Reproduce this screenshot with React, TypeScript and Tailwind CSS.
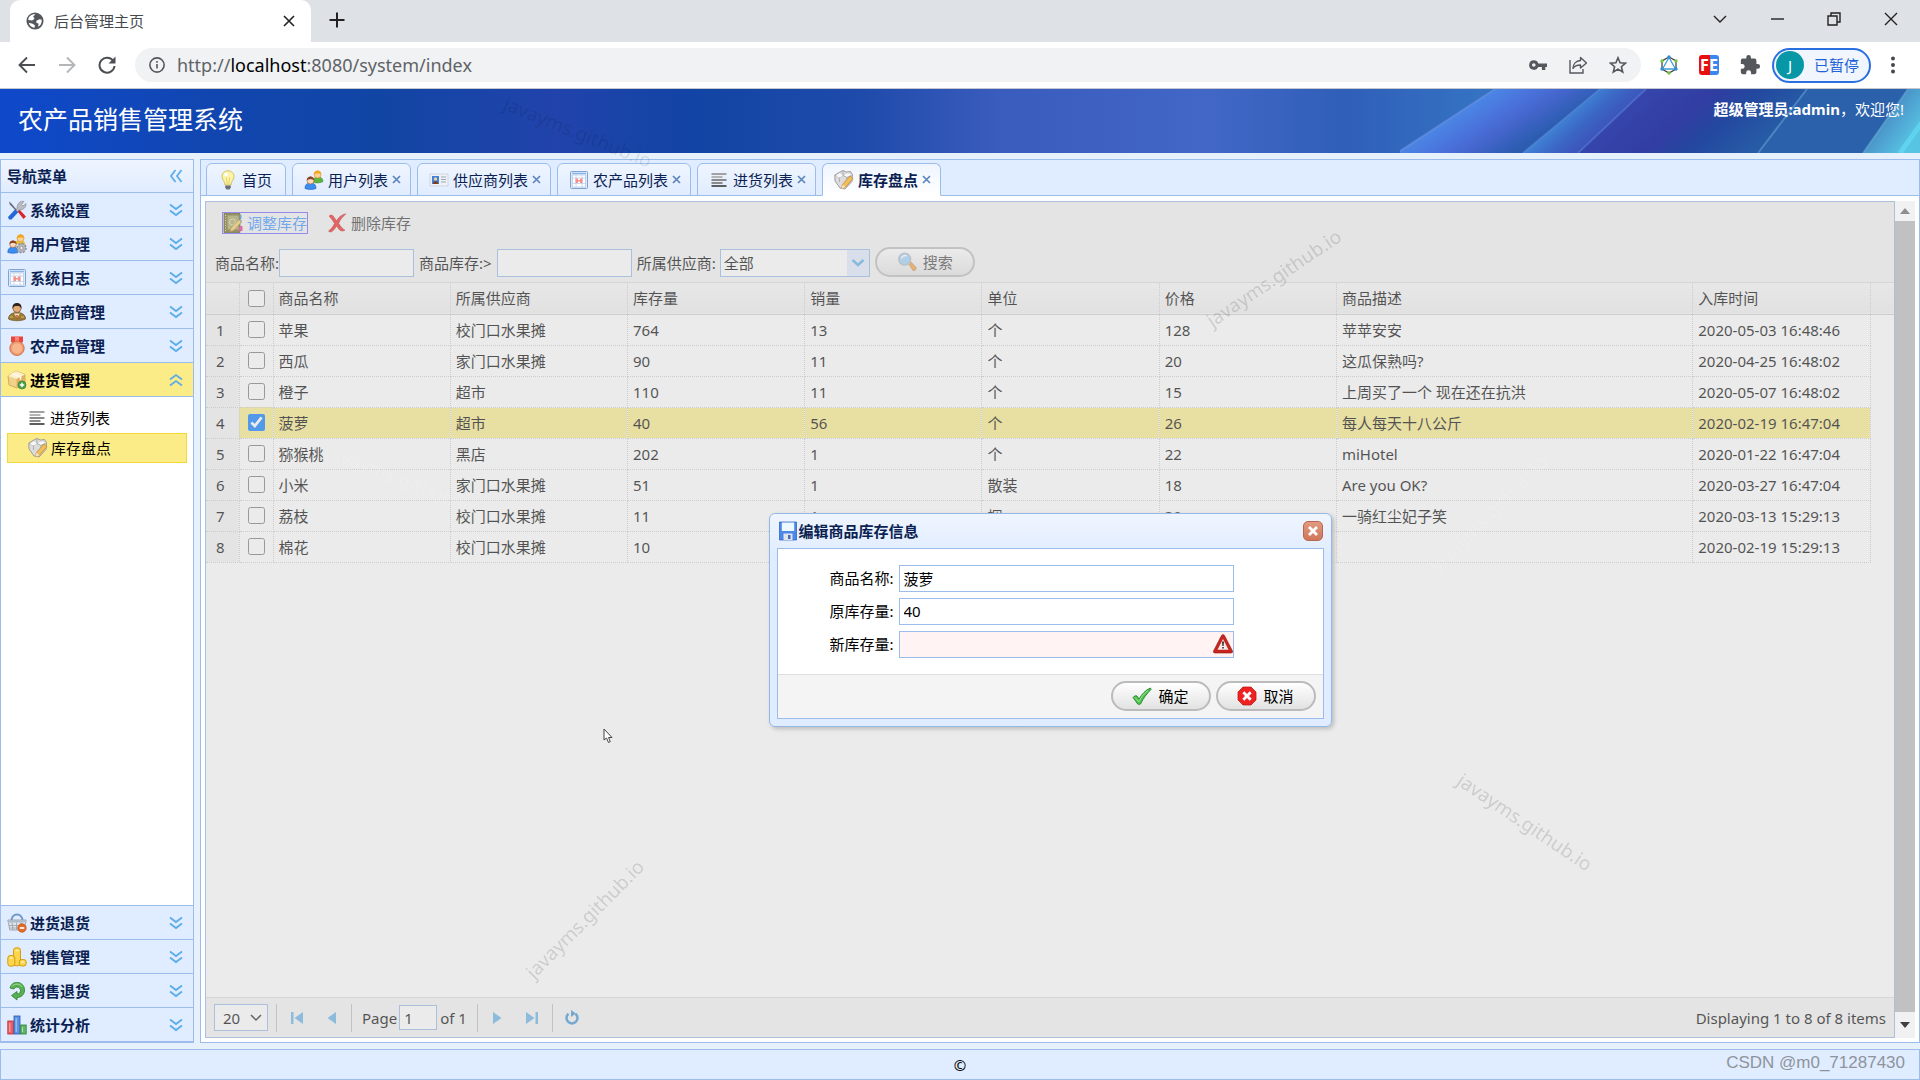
import type { ReactNode } from "react";

type IconProps = { className?: string };

function Svg({ children, className = "h-5 w-5" }: { children: ReactNode; className?: string }) {
  return (
    <svg viewBox="0 0 20 20" className={`shrink-0 ${className}`} fill="none" aria-hidden="true">
      {children}
    </svg>
  );
}

const ToolsIcon = () => (
  <Svg>
    <path d="M2 1.500 4 3l5.500 6.500-1 1L2.800 4.500z" fill="#6d6d78" />
    <path d="M9 9.500 11 8l8 8.500-2.500 2.500z" fill="#d9252a" />
    <path d="M1 17 8.500 9l3 3L4.500 19.500H2z" fill="#2568d8" />
    <path d="M10 8.500c0-5 3-8 7-7l-2.500 3 1.500 1.500L19 3.500c.5 4-3 6.500-6.500 6.500l-2 1.500-1.500-1z" fill="#b9bcc2" stroke="#85888f" strokeWidth=".6" />
  </Svg>
);

const UsersIcon = () => (
  <Svg>
    <path d="M9 12c0-3.500 2-5 5-5s5 1.500 5 4.500c-2 1.500-7 2-10 .5z" fill="#5cb53c" stroke="#3d8c2a" strokeWidth=".6" />
    <circle cx="13.500" cy="4.500" r="3.500" fill="#fbd29a" stroke="#d8922c" strokeWidth=".7" />
    <path d="M9.800 4.500C10 1.500 12 .5 13.500.5s3.800 1 3.700 4c-1.500-1.200-5-1.500-7.400 0z" fill="#f2a91c" />
    <path d="M1 18.500C1 14.500 3 13 6.500 13s5.500 1.500 5.500 5.500c-3 1.300-8 1.300-11 0z" fill="#3b8df0" stroke="#1c62c0" strokeWidth=".6" />
    <circle cx="6.500" cy="10.500" r="3.500" fill="#fcdcc0" stroke="#b0653e" strokeWidth=".7" />
    <path d="M2.800 10.500c0-3 2-4 3.700-4s3.800 1 3.700 4C8.700 9 5 8.500 2.800 10.500z" fill="#8d4327" />
  </Svg>
);

const UserGearIcon = () => (
  <Svg>
    <path d="M8 10c0-3 2-4 5-4s6 2 5 5z" fill="#e5c23c" />
    <circle cx="13.500" cy="4.200" r="3.500" fill="#fbd29a" stroke="#d8922c" strokeWidth=".7" />
    <path d="M9.800 4.500C10 1.500 12 .4 13.500.4s3.800 1 3.700 4c-1.500-1.200-5-1.500-7.400.1z" fill="#f2a91c" />
    <path d="M.8 18.500C.8 14.500 3 13 6 13s5 1.500 5 5.500c-3 1-7.500 1-10.200 0z" fill="#3b8df0" stroke="#1c62c0" strokeWidth=".6" />
    <circle cx="6" cy="10.200" r="3.300" fill="#fcdcc0" stroke="#b0653e" strokeWidth=".7" />
    <path d="M2.600 10.200c0-3 1.800-3.700 3.400-3.700s3.600.7 3.500 3.700C8 8.700 4.500 8.500 2.600 10.200z" fill="#8d4327" />
    <circle cx="14.500" cy="14" r="4.400" fill="#a4a6aa" stroke="#898b90" strokeWidth="1.600" strokeDasharray="2 1.400" />
    <circle cx="14.500" cy="14" r="3.800" fill="#b5b7bb" />
    <circle cx="14.500" cy="14" r="1.600" fill="#f4f4f4" stroke="#808287" strokeWidth=".6" />
  </Svg>
);

const ReportIcon = () => (
  <Svg>
    <rect x="1.500" y="1.500" width="17" height="17" rx="1" fill="#dbe9fa" stroke="#7fa3d2" />
    <path d="M3.500 5h13v12h-13z" fill="#fff" stroke="#a5bddc" strokeWidth=".6" />
    <path d="M3 3.400h14" stroke="#88b5e8" strokeWidth="1.200" />
    <path d="M3.500 8h13M3.500 13.500h13M7 5v12M13 5v12" stroke="#b5cbe6" strokeWidth=".7" />
    <path d="M6.500 8.500H9v1.600h2V8.500h2.500V13H11v-1.400H9V13H6.500z" fill="#f58f8c" />
  </Svg>
);

const SupplierIcon = () => (
  <Svg>
    <path d="M1.500 17c0-4 3-6.500 8.500-6.500s8.500 2.500 8.500 6.500c-4 2.300-13 2.300-17 0z" fill="#9c7a34" stroke="#6d5220" strokeWidth=".7" />
    <path d="M7 11.500 10 16l3-4.500z" fill="#f4e2b8" />
    <path d="m9.300 13 .7 5 .7-5z" fill="#b62d22" />
    <circle cx="10" cy="6.500" r="4" fill="#e4aa76" stroke="#714426" strokeWidth=".6" />
    <path d="M5.500 7C5 3 7 1 10 1s5 2 4.500 6c-.8-2.500-2-3-4.500-3S6.300 4.500 5.500 7z" fill="#30231c" />
    <path d="M3 15h3M14 15h3" stroke="#d9be6b" />
  </Svg>
);

const MedalIcon = () => (
  <Svg>
    <path d="M4 .5h12v5.500l-3 1.500H7L4 6z" fill="#e8453c" />
    <path d="M8 .5h4v6H8z" fill="#f9827a" />
    <circle cx="10" cy="12.300" r="7.200" fill="#f2986a" stroke="#c8673a" strokeWidth=".8" />
    <circle cx="10" cy="12.300" r="5.400" fill="#f8b48b" stroke="#efa077" strokeWidth=".6" />
  </Svg>
);

const BoxAddIcon = () => (
  <Svg>
    <path d="m1 6 8-5 9 3.500v8L10 18 2 15z" fill="#f2d18a" stroke="#c2994a" strokeWidth=".7" />
    <path d="m1 6 8.500 3L18 4.500 9 1z" fill="#fdf0cc" />
    <path d="M9.500 9v9L18 12.500v-8z" fill="#dfb163" />
    <path d="m5 3.500 8.500 3.200v3" stroke="#fff9e6" strokeWidth="1.600" />
    <circle cx="15" cy="15" r="4" fill="#4ba04a" stroke="#2f7a33" strokeWidth=".6" />
    <path d="M15 12.800v4.400M12.800 15h4.400" stroke="#fff" strokeWidth="1.400" />
  </Svg>
);

const ListIcon = () => (
  <Svg>
    <path d="M2.500 4h15" stroke="#a2a2a2" strokeWidth="2" />
    <path d="M2.500 7h11" stroke="#b4b4b4" strokeWidth="2" />
    <path d="M2.500 10h15" stroke="#8a8a8a" strokeWidth="2" />
    <path d="M2.500 13h11" stroke="#8a8a8a" strokeWidth="2" />
    <path d="M2.500 16h15" stroke="#5e5e5e" strokeWidth="2" />
  </Svg>
);

const StockIcon = () => (
  <Svg>
    <path d="m5 2.500 4-2 3.500 1.500 4-.5 2 3-.5 7-7 7.500-5-1L1 11 .8 5z" fill="#dcdcdc" stroke="#8b8b8b" strokeWidth=".8" />
    <path d="m1.500 5.500 4 2 3.500-2 4 1.800 4.500-2M5.500 7.500V12M9 1.200v4.300M13 7v3" stroke="#9b9b9b" strokeWidth=".7" />
    <path d="m2 6 3.500 1.500L9 5.800 5.500 3.200zM10 5.500l3 1.300 4-1.800-3-1.800z" fill="#fafafa" />
    <path d="M8.500 14.500 16 6l3 2.500-7.500 8.700-3.800 1.500z" fill="#f2bf5c" stroke="#bd7f25" strokeWidth=".7" />
    <path d="m7.700 18.700.8-4 3 2.500z" fill="#f7e3bf" />
  </Svg>
);

const BasketIcon = () => (
  <Svg>
    <path d="M4.500 8c0-4 2.500-6.500 5.500-6.500S15.500 4 15.500 8" stroke="#6e98cb" strokeWidth="2" />
    <path d="M.8 7h18.400l-2 10H2.800z" fill="#dfe3e8" stroke="#8f98a5" strokeWidth=".8" />
    <path d="M1 7h18v2.500H1z" fill="#aebccc" />
    <path d="M5 9.500 6 17m3.500-7.500V17m4.500-7.500L13 17M2 12.500h16M2.500 15h15" stroke="#8f98a5" strokeWidth=".7" />
    <circle cx="15" cy="15" r="4.200" fill="#ea6a25" stroke="#b4420f" strokeWidth=".6" />
    <path d="M12.700 15h4.600" stroke="#fff" strokeWidth="1.700" />
  </Svg>
);

const CoinsIcon = () => (
  <Svg>
    <g fill="#fbd54a" stroke="#d69a10" strokeWidth="1">
      <rect x="6.500" y=".8" width="7" height="18" rx="2.600" />
      <rect x=".8" y="8.500" width="7" height="10.700" rx="2.600" />
      <rect x="12.200" y="12.500" width="7" height="6.500" rx="2.600" />
    </g>
    <path d="M8.500 3.500h3M2.800 11h3M14.200 15h3" stroke="#fff3b8" strokeWidth="1.600" />
  </Svg>
);

const ReturnIcon = () => (
  <Svg>
    <path d="M3 7c1-4 4-6 8-5.500 4 .5 7 4 6.500 8.500-.5 4-3.500 6.500-7.500 6.500V19l-5.500-4.500 5.500-4v2.500c2 0 3.500-1.200 3.500-3.200C13.500 7.500 12 6 10 6c-1.500 0-2.500.8-3 2z" fill="#58b14f" stroke="#2f7e2f" strokeWidth=".8" />
    <path d="M5 5.500C7 2.500 13 2 15 6" stroke="#a6dda0" />
  </Svg>
);

const ChartIcon = () => (
  <Svg>
    <rect x=".8" y="6" width="5.500" height="13" fill="#ea6064" stroke="#b92a31" strokeWidth=".8" />
    <rect x="7" y="1" width="6" height="18" fill="#5d93e4" stroke="#2457a8" strokeWidth=".8" />
    <rect x="13.700" y="10" width="5.500" height="9" fill="#5fb766" stroke="#2b7d33" strokeWidth=".8" />
    <path d="M2.800 8v9M9.200 3v14M15.500 12v5" stroke="#fff" strokeOpacity=".5" />
  </Svg>
);

const BulbIcon = () => (
  <Svg>
    <path d="M10 .8c3.600 0 6 2.600 6 5.700 0 3.500-3 4.500-3 8.500H7c0-4-3-5-3-8.500C4 3.400 6.400.8 10 .8z" fill="#fbf3a6" stroke="#c9bb4e" strokeWidth=".9" />
    <path d="M8.300 7.500 9.200 14M11.700 7.500l-.9 6.500" stroke="#d8c552" strokeWidth=".7" />
    <ellipse cx="8" cy="4.500" rx="1.800" ry="2" fill="#fff" />
    <path d="M7.200 15.500h5.600v2L11.500 19.500h-3l-1.300-2z" fill="#6d7078" />
  </Svg>
);

const CardIcon = () => (
  <Svg>
    <path d="M1 4h18v12H1z" fill="#eef2f6" stroke="#c3ccd6" strokeWidth=".7" />
    <path d="M3 6h7v8H3z" fill="#3d82d8" />
    <circle cx="6.500" cy="9" r="1.700" fill="#f8cfa0" />
    <path d="M4 14c0-2 1-3 2.500-3S9 12 9 14z" fill="#7e3d20" />
    <path d="M12 7h5M12 9.500h5M12 12h5" stroke="#9ba6b3" />
  </Svg>
);

const EditBookIcon = () => (
  <Svg>
    <path d="M1 .5h16v19H1z" fill="#6f6a1c" stroke="#47430c" strokeWidth=".8" />
    <path d="M4.500 2.500h11v14h-11z" fill="#a9a55c" />
    <path d="M2.500 2v16" stroke="#e4dfa5" strokeDasharray="1 1.500" />
    <path d="M17.500 2v4M17.500 7v3" stroke="#278ed0" strokeWidth="2" />
    <circle cx="9.500" cy="9" r="3" stroke="#dedbb5" strokeWidth="1" />
    <path d="m8 15 8-8.500 2.500 2.500-8 8.500L7 18.500z" fill="#f2cf62" stroke="#a67818" strokeWidth=".7" />
    <path d="M17 13h2.500v5H15z" fill="#ec2a92" />
  </Svg>
);

const DeleteIcon = () => (
  <Svg>
    <path d="M2 3c2-1.500 3.500-1 4.500.5l3 4.300C11.500 4.500 14.500 1.500 19 .8c-3.500 3-6 6-7.300 9.500 1.200 2.500 3.300 5 6.300 7-2.500 1.200-5 .7-6-1L9.500 13c-1.500 2.500-2.500 4.300-5 5.700-1.300.4-2.500.1-3-.7C4.500 15.800 6 13.500 7.500 10.500 6 8 4.500 5.500 2 3z" fill="#f02020" stroke="#c80f0f" strokeWidth=".6" />
  </Svg>
);

const SearchIcon = () => (
  <Svg>
    <path d="m11.500 11.500 2-2 5.500 6c.5 2-1 3.500-3 3z" fill="#f0a040" stroke="#bf6a14" strokeWidth=".6" />
    <circle cx="7.700" cy="7.200" r="5.900" fill="#9ed3fb" stroke="#a9bacb" strokeWidth="1.500" />
    <path d="M4.500 6.500C5 4 7.500 3 9.500 4" stroke="#fff" strokeWidth="1.500" />
  </Svg>
);

const SaveIcon = () => (
  <Svg>
    <path d="M1.500 1h17v18h-17z" fill="#4a88ea" stroke="#225ac0" strokeWidth=".7" />
    <path d="M3.800 1.500h12.400V10H3.800z" fill="#eef8ff" />
    <path d="M5.500 12.500h9V19h-9z" fill="#dfe3ec" />
    <path d="M10 14h2.500v4H10z" fill="#4b6ab0" />
  </Svg>
);

const WarningIcon = ({ className }: IconProps) => (
  <Svg className={className}>
    <path d="M8.500 1.500q1.500-2 3 0L19.500 17q.5 2-1.500 2H2q-2 0-1.500-2z" fill="#c9251f" stroke="#8e1713" strokeWidth=".6" />
    <path d="M10 5 15.500 15.800h-11z" fill="#f3e9e6" />
    <path d="M9 7.500h2l-.4 4.500H9.400zM9.200 13h1.600v1.600H9.200z" fill="#333" />
  </Svg>
);

const OkIcon = () => (
  <Svg>
    <path d="M1 11.500c1-1.500 2.500-2 4-1.500l2 3C10 8 13.500 4 18.500 2l.5 1.500C14.500 8 11.500 12 8.500 18c-.8.600-2 .6-2.800 0z" fill="#4fbf4b" stroke="#258a2a" strokeWidth=".9" />
    <path d="M3 11.500 6.800 16C9.500 10.500 12.500 7 16 4.500" stroke="#a4e79b" strokeWidth=".9" />
  </Svg>
);

const NoIcon = () => (
  <Svg>
    <path d="M6 1h8l5 5v8l-5 5H6l-5-5V6z" fill="#ee2222" stroke="#bb1010" strokeWidth=".7" />
    <path d="m6.300 6.300 7.400 7.400m0-7.400-7.400 7.400" stroke="#fff" strokeWidth="2.800" />
  </Svg>
);

const Chevrons = ({ up = false }: { up?: boolean }) => (
  <svg viewBox="0 0 14 14" className={`h-3.5 w-3.5 ${up ? "rotate-180" : ""}`} fill="none" stroke="#5cade8" strokeWidth="1.800">
    <path d="m1 1.500 6 4.500 6-4.500M1 7.500 7 12l6-4.500" />
  </svg>
);

const topMenus = [
  { name: "系统设置", icon: ToolsIcon },
  { name: "用户管理", icon: UserGearIcon },
  { name: "系统日志", icon: ReportIcon },
  { name: "供应商管理", icon: SupplierIcon },
  { name: "农产品管理", icon: MedalIcon },
  { name: "进货管理", icon: BoxAddIcon, open: true },
];

const bottomMenus = [
  { name: "进货退货", icon: BasketIcon },
  { name: "销售管理", icon: CoinsIcon },
  { name: "销售退货", icon: ReturnIcon },
  { name: "统计分析", icon: ChartIcon },
];

const tabs = [
  { name: "首页", icon: BulbIcon },
  { name: "用户列表", icon: UsersIcon, closable: true },
  { name: "供应商列表", icon: CardIcon, closable: true },
  { name: "农产品列表", icon: ReportIcon, closable: true },
  { name: "进货列表", icon: ListIcon, closable: true },
  { name: "库存盘点", icon: StockIcon, closable: true, active: true },
];

const columns = ["商品名称", "所属供应商", "库存量", "销量", "单位", "价格", "商品描述", "入库时间"];

const goods = [
  ["苹果", "校门口水果摊", "764", "13", "个", "128", "苹苹安安", "2020-05-03 16:48:46"],
  ["西瓜", "家门口水果摊", "90", "11", "个", "20", "这瓜保熟吗?", "2020-04-25 16:48:02"],
  ["橙子", "超市", "110", "11", "个", "15", "上周买了一个 现在还在抗洪", "2020-05-07 16:48:02"],
  ["菠萝", "超市", "40", "56", "个", "26", "每人每天十八公斤", "2020-02-19 16:47:04"],
  ["猕猴桃", "黑店", "202", "1", "个", "22", "miHotel", "2020-01-22 16:47:04"],
  ["小米", "家门口水果摊", "51", "1", "散装", "18", "Are you OK?", "2020-03-27 16:47:04"],
  ["荔枝", "校门口水果摊", "11", "1", "捆", "30", "一骑红尘妃子笑", "2020-03-13 15:29:13"],
  ["棉花", "校门口水果摊", "10", "", "", "", "", "2020-02-19 15:29:13"],
];

const selectedRow = 3;

function MenuHeader({ name, icon: Icon, open }: { name: string; icon: () => ReactNode; open?: boolean }) {
  return (
    <button
      className={`flex h-[34px] w-full items-center border-b border-[#9cbdec] pr-2.5 pl-1.5 text-left font-bold ${
        open ? "bg-[#fbec88] text-black" : "bg-[#e0ecff] text-[#0b1f52]"
      }`}
    >
      <Icon />
      <span className="ml-[3px] flex-1">{name}</span>
      <Chevrons up={open} />
    </button>
  );
}

function Browser() {
  return (
    <header className="text-[#45494d]">
      <div className="flex h-[42px] items-end bg-[#dee1e6] pl-2.5">
        <div className="flex h-[42px] w-[301px] items-center rounded-t-[10px] bg-white px-4">
          <svg viewBox="0 0 20 20" className="h-[18px] w-[18px]" aria-hidden="true">
            <circle cx="10" cy="10" r="9.500" fill="#54585d" />
            <path d="M10.500 2.500 8 5l1.500 2.500L7 9.500 2.500 9C2.500 5 6 2 10.500 2.500zM3 12l4.500 1 2.500 2-.5 2.500C6 17.500 4 15 3 12zM12 9.500l3-1.500 2.500.5c.2 4-1.500 6.500-4 8L14 13l-3-1.500z" fill="#fff" />
          </svg>
          <span className="ml-2.5 flex-1 text-[15px]">后台管理主页</span>
          <button aria-label="关闭标签页">
            <svg viewBox="0 0 12 12" className="h-3 w-3" stroke="#222" strokeWidth="1.600">
              <path d="m1 1 10 10M11 1 1 11" />
            </svg>
          </button>
        </div>
        <button aria-label="新标签页" className="mb-3.5 ml-[18px]">
          <svg viewBox="0 0 16 16" className="h-4 w-4" stroke="#222" strokeWidth="2">
            <path d="M8 .5v15M.5 8h15" />
          </svg>
        </button>
        <div className="mb-4 ml-auto flex items-center gap-[43px] pr-[22px]">
          {["m1 4 6 6 6-6", "M1 7h13", "M1 4h9v9H1zM4 4V1h9v9h-3", "m1 1 12 12M13 1 1 13"].map((d) => (
            <svg key={d} viewBox="0 0 14 14" className="h-3.5 w-3.5" fill="none" stroke="#222" strokeWidth="1.400">
              <path d={d} />
            </svg>
          ))}
        </div>
      </div>

      <div className="flex h-[47px] items-center border-b border-[#c4c7cb] bg-white pr-[25px] pl-[18px]">
        <div className="flex w-[117px] items-center gap-[22px]">
          <svg viewBox="0 0 18 18" className="h-[18px] w-[18px]" fill="none" stroke="#4b4f54" strokeWidth="1.900">
            <path d="M17 9H2M9 1.500 1.500 9 9 16.500" />
          </svg>
          <svg viewBox="0 0 18 18" className="h-[18px] w-[18px]" fill="none" stroke="#b4b7ba" strokeWidth="1.900">
            <path d="M1 9h15M9 1.500 16.500 9 9 16.500" />
          </svg>
          <svg viewBox="0 0 18 18" className="h-[18px] w-[18px]" fill="none" stroke="#4b4f54" strokeWidth="2">
            <path d="M15.300 5A7.500 7.500 0 1 0 16.500 10" />
            <path d="M17.500.5v7h-7z" fill="#4b4f54" stroke="none" />
          </svg>
        </div>
        <div className="flex h-[34px] flex-1 items-center rounded-full bg-[#f0f2f3] px-3.5">
          <svg viewBox="0 0 18 18" className="h-4 w-4" fill="none" stroke="#54585d" strokeWidth="1.800">
            <circle cx="9" cy="9" r="8" />
            <path d="M9 8v5M9 4.500v2" />
          </svg>
          <span className="ml-3 flex-1 text-lg text-[#5f6368]">
            http://<span className="text-black">localhost</span>:8080/system/index
          </span>
          <div className="flex items-center gap-[22px]">
            <svg viewBox="0 0 18 18" className="h-[18px] w-[18px]" fill="#54585d">
              <path fillRule="evenodd" d="M4.800 4.200a4.800 4.800 0 0 1 4.500 3.200H18V11h-1.700v3h-3.400v-3H9.300A4.800 4.800 0 1 1 4.800 4.200zm0 3a1.800 1.800 0 1 0 0 3.600 1.800 1.800 0 0 0 0-3.600z" />
            </svg>
            <svg viewBox="0 0 18 18" className="h-[18px] w-[18px]" fill="none" stroke="#54585d" strokeWidth="1.400">
              <path d="M1 4v13h13v-4" />
              <path d="M11.500 1.500 17.500 7l-6 5V9c-3.500 0-6 .8-7.500 3.500C4 8 7 4.800 11.500 4.500z" strokeLinejoin="round" />
            </svg>
            <svg viewBox="0 0 18 18" className="h-[18px] w-[18px]" fill="none" stroke="#54585d" strokeWidth="1.600">
              <path d="m9 1.800 2.100 5 5.400.4-4.100 3.500 1.300 5.300L9 13.100 4.300 16l1.300-5.300L1.500 7.200l5.400-.4z" />
            </svg>
          </div>
        </div>
        <div className="ml-[18px] flex items-center gap-5">
          <svg viewBox="0 0 20 20" className="h-5 w-5" fill="none">
            <path d="M10 2 17 6v8l-7 4-7-4V6z" stroke="#444" strokeWidth="1.300" />
            <path d="m10 2.500 6.500 11.500h-13z" stroke="#3e9cdc" strokeWidth="1.300" />
            <g fill="#2f8ed8">
              <circle cx="10" cy="2" r="1.700" />
              <circle cx="3" cy="14" r="1.700" />
              <circle cx="17" cy="14" r="1.700" />
            </g>
            <g fill="#76c63c">
              <circle cx="3" cy="6" r="1.700" />
              <circle cx="17" cy="6" r="1.700" />
              <circle cx="10" cy="18" r="1.700" />
            </g>
          </svg>
          <div className="flex h-5 w-5 overflow-hidden rounded-[3px] bg-[linear-gradient(90deg,#e80f0f_55%,#3c86f2_55%)] text-base leading-5 font-bold text-white">
            <span className="flex-1 pl-px">F</span>
            <span className="pr-px">E</span>
          </div>
          <svg viewBox="0 0 24 24" className="h-[22px] w-[22px]" fill="#54585d">
            <path d="M20.500 11H19V7a2 2 0 0 0-2-2h-4V3.500a2.500 2.500 0 0 0-5 0V5H4a2 2 0 0 0-2 2v3.800h1.500a2.700 2.700 0 0 1 0 5.400H2V20a2 2 0 0 0 2 2h3.800v-1.500a2.700 2.700 0 0 1 5.400 0V22H17a2 2 0 0 0 2-2v-4h1.500a2.500 2.500 0 0 0 0-5z" />
          </svg>
        </div>
        <button className="ml-[11px] flex h-[35px] items-center gap-2.5 rounded-full border-2 border-[#2a6fe0] bg-[#f1f5fd] pr-2.5 pl-0.5 text-[15px] text-[#1d63d8]">
          <span className="flex h-7 w-7 items-center justify-center rounded-full bg-[#0897a7] text-white">J</span>
          已暂停
        </button>
        <svg viewBox="0 0 4 18" className="ml-5 h-[18px] w-1" fill="#45494d">
          <circle cx="2" cy="2.500" r="2" />
          <circle cx="2" cy="9" r="2" />
          <circle cx="2" cy="15.500" r="2" />
        </svg>
      </div>
    </header>
  );
}

function Banner() {
  return (
    <div className="relative flex h-16 justify-between bg-[linear-gradient(90deg,#0f49cb_0%,#1146b0_11%,#1145a4_20%,#2143ab_29%,#1144a4_36%,#1f4bab_45%,#3a5cbd_52%,#4267c6_63%,#2f5fb9_70%,#3572c2_77%,#3572c2_100%)] text-white">
      <svg viewBox="0 0 520 64" preserveAspectRatio="xMaxYMid slice" className="absolute top-0 right-0 h-16 w-[520px]">
        <defs>
          <linearGradient id="beamA" gradientUnits="userSpaceOnUse" x1="46" y1="32" x2="80" y2="85">
            <stop offset="0" stopColor="#4b86e4" />
            <stop offset=".35" stopColor="#4a72da" />
            <stop offset=".6" stopColor="#4466cc" />
            <stop offset="1" stopColor="#2b5cb0" />
          </linearGradient>
          <linearGradient id="beamB" gradientUnits="userSpaceOnUse" x1="161" y1="32" x2="183" y2="57">
            <stop offset="0" stopColor="#3f80d4" />
            <stop offset=".5" stopColor="#3b66c4" />
            <stop offset="1" stopColor="#3d55bc" />
          </linearGradient>
          <linearGradient id="beamC" gradientUnits="userSpaceOnUse" x1="212" y1="32" x2="287" y2="117">
            <stop offset="0" stopColor="#3645ac" />
            <stop offset=".4" stopColor="#313da2" />
            <stop offset=".65" stopColor="#23489f" />
            <stop offset="1" stopColor="#275ba6" />
          </linearGradient>
          <linearGradient id="beamD" gradientUnits="userSpaceOnUse" x1="485" y1="32" x2="512" y2="52">
            <stop offset="0" stopColor="#4a94c8" />
            <stop offset="1" stopColor="#58c4e4" />
          </linearGradient>
        </defs>
        <path d="M95 0h105l-77 64H-3z" fill="url(#beamA)" />
        <path d="M200 0h46l-68 64h-55z" fill="url(#beamB)" />
        <path d="M246 0h161l-49 64H178z" fill="url(#beamC)" />
        <path d="M407 0h113v64H358z" fill="#2a61aa" />
        <path d="M508 0h12v64h-57z" fill="url(#beamD)" />
        <g strokeWidth="2" strokeOpacity=".4">
          <path d="M95 0-3 64" stroke="#7f9bec" />
          <path d="m200 0-77 64M246 0l-68 64" stroke="#6391dc" />
          <path d="m407 0-49 64M508 0l-45 64" stroke="#79bde0" />
          <path d="m530 22-30 42" stroke="#6df0ff" strokeWidth="5" />
        </g>
      </svg>
      <h1 className="pt-3 pl-[18px] text-[25px] leading-9">农产品销售管理系统</h1>
      <p className="relative pt-2.5 pr-4">
        <strong>超级管理员:admin</strong>，欢迎您!
      </p>
    </div>
  );
}

function Sidebar() {
  return (
    <nav className="flex w-[194px] shrink-0 flex-col border border-[#9cbdec] bg-white">
      <div className="flex h-[33px] items-center justify-between border-b border-[#9cbdec] bg-linear-to-b from-[#eff5ff] to-[#e0ecff] pr-2.5 pl-1.5 font-bold text-[#0b1f52]">
        导航菜单
        <button aria-label="收起菜单" className="rotate-90">
          <Chevrons />
        </button>
      </div>
      {topMenus.map((menu) => (
        <MenuHeader key={menu.name} {...menu} />
      ))}
      <ul className="flex-1 px-1.5 pt-1.5 text-black">
        <li className="flex h-[30px] items-center pl-5">
          <ListIcon />
          <a href="#list" className="ml-[3px]">进货列表</a>
        </li>
        <li className="flex h-[30px] items-center border border-[#f3d93a] bg-[#fbec88] pl-5">
          <StockIcon />
          <a href="#stock" className="ml-[3px]">库存盘点</a>
        </li>
      </ul>
      <div className="border-t border-[#9cbdec]">
        {bottomMenus.map((menu) => (
          <MenuHeader key={menu.name} {...menu} />
        ))}
      </div>
    </nav>
  );
}

function Toolbar() {
  return (
    <div className="border-b border-[#ddd] bg-[#f4f4f4] px-[9px] pt-2.5 pb-[3px]">
      <div className="flex items-center gap-[19px] pl-[7px]">
        <button className="flex h-[22px] items-center gap-1 border border-[#7060ff] text-[#3490ff]">
          <EditBookIcon />
          调整库存
        </button>
        <button className="flex h-[22px] items-center gap-1 text-[#333]">
          <DeleteIcon />
          删除库存
        </button>
      </div>
      <form className="mt-[13px] flex h-8 items-center gap-[5px]">
        <div className="flex items-center">
          <label htmlFor="q-name">商品名称:</label>
          <input id="q-name" className="h-7 w-[135px] border border-[#95b8e7] bg-white px-1" />
        </div>
        <div className="flex items-center gap-[5px]">
          <label htmlFor="q-stock">商品库存:&gt;</label>
          <input id="q-stock" className="h-7 w-[135px] border border-[#95b8e7] bg-white px-1" />
        </div>
        <div className="flex items-center gap-1">
          <label htmlFor="q-supplier">所属供应商:</label>
          <div className="relative">
            <select id="q-supplier" className="block h-7 w-[150px] appearance-none border border-[#95b8e7] bg-white px-[3px]">
              <option>全部</option>
            </select>
            <span className="pointer-events-none absolute inset-y-px right-px flex w-[22px] items-center justify-center bg-[#e0ecff]">
              <svg viewBox="0 0 14 8" className="h-2 w-3.5" fill="none" stroke="#5cade8" strokeWidth="2.500">
                <path d="m1.500 1 5.500 5 5.500-5" />
              </svg>
            </span>
          </div>
        </div>
        <button
          type="button"
          className="mb-0.5 flex h-[30px] w-[100px] items-center justify-center gap-1.5 rounded-full border-2 border-[#bbb] bg-linear-to-b from-white to-[#e4e4e4] text-[#444]"
        >
          <SearchIcon />
          搜索
        </button>
      </form>
    </div>
  );
}

function GoodsTable() {
  return (
    <table className="w-full table-fixed text-left">
      <colgroup>
        <col className="w-[33px]" />
        <col className="w-[34px]" />
        <col className="w-[10.5%]" />
        <col className="w-[10.5%]" />
        <col className="w-[10.5%]" />
        <col className="w-[10.5%]" />
        <col className="w-[10.5%]" />
        <col className="w-[10.5%]" />
        <col />
        <col className="w-[10.5%]" />
        <col className="w-[24px]" />
      </colgroup>
      <thead>
        <tr className="h-[31px] border-b border-[#ccc] bg-linear-to-b from-[#f9f9f9] to-[#efefef]">
          <th className="border-r border-dotted border-[#ccc]" />
          <th className="border-r border-dotted border-[#ccc]">
            <input type="checkbox" aria-label="全选" className="mx-auto block h-[17px] w-[17px]" />
          </th>
          {columns.map((column) => (
            <th key={column} className="border-r border-dotted border-[#ccc] px-[5px] font-normal">
              {column}
            </th>
          ))}
          <th />
        </tr>
      </thead>
      <tbody>
        {goods.map((row, index) => {
          const cell = `border-r border-b border-dotted border-[#ccc] ${index === selectedRow ? "bg-[#fbec88]" : ""}`;
          return (
            <tr key={row[0]} className="h-[31px]">
              <td className="border-r border-b border-dotted border-[#ccc] bg-[#f4f4f4] pr-1 text-center">{index + 1}</td>
              <td className={cell}>
                <input
                  type="checkbox"
                  aria-label={row[0]}
                  defaultChecked={index === selectedRow}
                  className="mx-auto block h-[17px] w-[17px]"
                />
              </td>
              {row.map((value, i) => (
                <td key={columns[i]} className={`${cell} truncate px-[5px]`}>
                  {value}
                </td>
              ))}
              <td />
            </tr>
          );
        })}
      </tbody>
    </table>
  );
}

function PagerButton({ d, label }: { d: string; label: string }) {
  return (
    <button aria-label={label} className="flex w-[35px] justify-center">
      <svg viewBox="0 0 14 14" className="h-3.5 w-3.5" fill="#62b0e6">
        <path d={d} />
      </svg>
    </button>
  );
}

function Pager() {
  return (
    <div className="flex h-10 items-center border-t border-[#ddd] bg-[#f4f4f4] px-2">
      <div className="relative">
        <select aria-label="每页条数" className="block h-[27px] w-[54px] appearance-none border border-[#95b8e7] bg-white pl-2">
          <option>20</option>
        </select>
        <svg viewBox="0 0 12 8" className="pointer-events-none absolute top-[10px] right-1.5 h-2 w-3" fill="none" stroke="#222" strokeWidth="1.500">
          <path d="m1 1 5 5 5-5" />
        </svg>
      </div>
      <span className="mr-0.5 ml-2 h-7 border-l border-[#bbb]" />
      <PagerButton label="首页" d="M1 1h2.500v12H1zM13 1v12L4.500 7z" />
      <PagerButton label="上一页" d="M11 1v12L2.500 7z" />
      <span className="ml-0.5 h-7 border-l border-[#bbb]" />
      <label className="ml-2.5 flex items-center gap-0.5">
        Page
        <input defaultValue="1" className="h-[25px] w-[38px] border border-[#95b8e7] bg-white px-1" />
      </label>
      <span className="mr-2.5 ml-[3px]">of 1</span>
      <span className="mr-0.5 h-7 border-l border-[#bbb]" />
      <PagerButton label="下一页" d="M3 1v12L11.500 7z" />
      <PagerButton label="末页" d="M10.500 1H13v12h-2.500zM1 1v12l8.500-6z" />
      <span className="mr-0.5 ml-0.5 h-7 border-l border-[#bbb]" />
      <button aria-label="刷新" className="flex w-[35px] justify-center">
        <svg viewBox="0 0 16 16" className="h-4 w-4" fill="none" stroke="#3a8fd0" strokeWidth="2.500">
          <path d="M4.500 3.700a5.500 5.500 0 1 0 7 0" />
          <path d="M7 0v7l5-3.500z" fill="#3a8fd0" stroke="none" />
        </svg>
      </button>
      <span className="ml-auto">Displaying 1 to 8 of 8 items</span>
    </div>
  );
}

function StockDialog() {
  const field = "h-[27px] w-[335px] border border-[#9cbdec] px-1";
  const button =
    "flex h-[30px] w-[100px] items-center justify-center gap-1.5 rounded-full border-2 border-[#bbb] bg-linear-to-b from-white to-[#e2e2e2]";
  return (
    <section
      role="dialog"
      aria-label="编辑商品库存信息"
      className="flex w-[563px] flex-col rounded-md border border-[#95b8e7] bg-linear-to-b from-[#eff5ff] to-[#e0ecff] to-20% px-[7px] pb-[7px] text-black shadow-[2px_2px_4px_#bbb]"
    >
      <div className="flex h-[34px] items-center px-px">
        <SaveIcon />
        <h2 className="ml-px flex-1 font-bold text-[#0b1f52]">编辑商品库存信息</h2>
        <button aria-label="关闭" className="flex h-5 w-5 items-center justify-center rounded-[5px] border border-[#b8664c] bg-linear-to-b from-[#e29a80] to-[#cf765a]">
          <svg viewBox="0 0 10 10" className="h-2.5 w-2.5" stroke="#fff" strokeWidth="2.800">
            <path d="m1 1 8 8M9 1 1 9" />
          </svg>
        </button>
      </div>
      <form className="border border-[#9cbdec] bg-white">
        <div className="flex flex-col gap-1.5 pt-4 pb-4 pl-[52px]">
          <div className="flex items-center gap-1">
            <label htmlFor="name" className="w-[65px]">商品名称:</label>
            <input id="name" className={field} defaultValue="菠萝" />
          </div>
          <div className="flex items-center gap-1">
            <label htmlFor="stock" className="w-[65px]">原库存量:</label>
            <input id="stock" className={field} defaultValue="40" />
          </div>
          <div className="flex items-center gap-1">
            <label htmlFor="new-stock" className="w-[65px]">新库存量:</label>
            <div className="relative">
              <input id="new-stock" className={`${field} block bg-[#fff3f3]`} />
              <WarningIcon className="pointer-events-none absolute top-[3px] right-px h-5 w-5" />
            </div>
          </div>
        </div>
        <div className="flex justify-end gap-[5px] border-t border-[#ddd] bg-[#f4f4f4] pt-1.5 pr-[7px] pb-[7px]">
          <button type="button" className={button}>
            <OkIcon />
            确定
          </button>
          <button type="button" className={button}>
            <NoIcon />
            取消
          </button>
        </div>
      </form>
    </section>
  );
}

function Workspace() {
  return (
    <main className="flex min-w-0 flex-1 flex-col border border-[#9cbdec] bg-white">
      <div className="flex h-9 items-end gap-1.5 border-b border-[#9cbdec] bg-[#e0ecff] pl-[5px]" role="tablist">
        {tabs.map(({ name, icon: Icon, closable, active }) => (
          <div
            key={name}
            className={`-mb-px flex h-[33px] items-center gap-1 rounded-t-md border border-[#9cbdec] pl-[11px] text-[#0b1f52] ${
              active ? "border-b-white bg-linear-to-b from-[#eff5ff] to-white font-bold" : "bg-linear-to-b from-[#eff5ff] to-[#e0ecff]"
            } ${closable ? "pr-[9px]" : "pr-[13px]"}`}
          >
            <Icon />
            <button role="tab" aria-selected={!!active}>{name}</button>
            {closable && (
              <button aria-label={`关闭${name}`}>
                <svg viewBox="0 0 9 9" className="h-[9px] w-[9px]" stroke="#5d85bd" strokeWidth="1.700">
                  <path d="m1 1 7 7M8 1 1 8" />
                </svg>
              </button>
            )}
          </div>
        ))}
      </div>
      <div className="flex flex-1 px-1 pt-[5px] pb-1">
        <div className="relative flex min-w-0 flex-1 flex-col">
          <div className="flex flex-1 flex-col border border-[#95b8e7] bg-white text-black">
            <Toolbar />
            <div className="flex-1">
              <GoodsTable />
            </div>
            <Pager />
          </div>
          {/* modal mask */}
          <div className="absolute inset-0 bg-[#ccc]/40" />
          <div className="absolute inset-0 flex items-center justify-center">
            <StockDialog />
          </div>
        </div>
        <div className="flex w-5 flex-col items-center bg-[#f1f1f1]">
          <svg viewBox="0 0 10 6" className="my-[7px] h-1.5 w-2.5" fill="#8f8f8f">
            <path d="M5 0 10 6H0z" />
          </svg>
          <div className="w-full flex-1 bg-[#c1c1c1]" />
          <svg viewBox="0 0 10 6" className="my-2.5 h-1.5 w-2.5" fill="#404040">
            <path d="M0 0h10L5 6z" />
          </svg>
        </div>
      </div>
    </main>
  );
}

export default function App() {
  return (
    <div className="relative flex min-h-screen flex-col overflow-hidden bg-[#e7f1fb] font-['Noto_Sans','Noto_Sans_CJK_SC',sans-serif] text-[15px] leading-5">
      <Browser />
      <Banner />
      <div className="flex flex-1 gap-1.5 py-1.5">
        <Sidebar />
        <Workspace />
      </div>
      <footer className="relative flex h-[31px] items-center justify-center border border-[#9cbdec] bg-[#e0ecff] text-black">
        ©
        <span className="absolute top-[3px] right-3.5 font-['Liberation_Sans',sans-serif] text-[17px] text-[#8e949c]">CSDN @m0_71287430</span>
      </footer>

      {/* watermarks */}
      <div className="pointer-events-none absolute inset-0 text-[19px] leading-7 text-black/15">
        <span className="absolute top-[264px] left-[1195px] -rotate-[34deg]">javayms.github.io</span>
        <span className="absolute top-[905px] left-[506px] -rotate-[45deg]">javayms.github.io</span>
        <span className="absolute top-[808px] left-[1446px] rotate-[34deg]">javayms.github.io</span>
        <span className="absolute top-[118px] left-[499px] rotate-[22deg] text-black/10">javayms.github.io</span>
        <span className="absolute top-[465px] left-[322px] rotate-[22deg] text-white/15">javayms.github.io</span>
        <span className="absolute top-[500px] left-[1410px] -rotate-[45deg] text-white/15">javayms.github.io</span>
      </div>

      <svg viewBox="0 0 12 16" className="pointer-events-none absolute top-[728px] left-[603px] h-4 w-3" fill="#fff" stroke="#444">
        <path d="M1 1v11l2.500-2 2 4.500 1.800-.9L5.500 9.500H9z" />
      </svg>
    </div>
  );
}
